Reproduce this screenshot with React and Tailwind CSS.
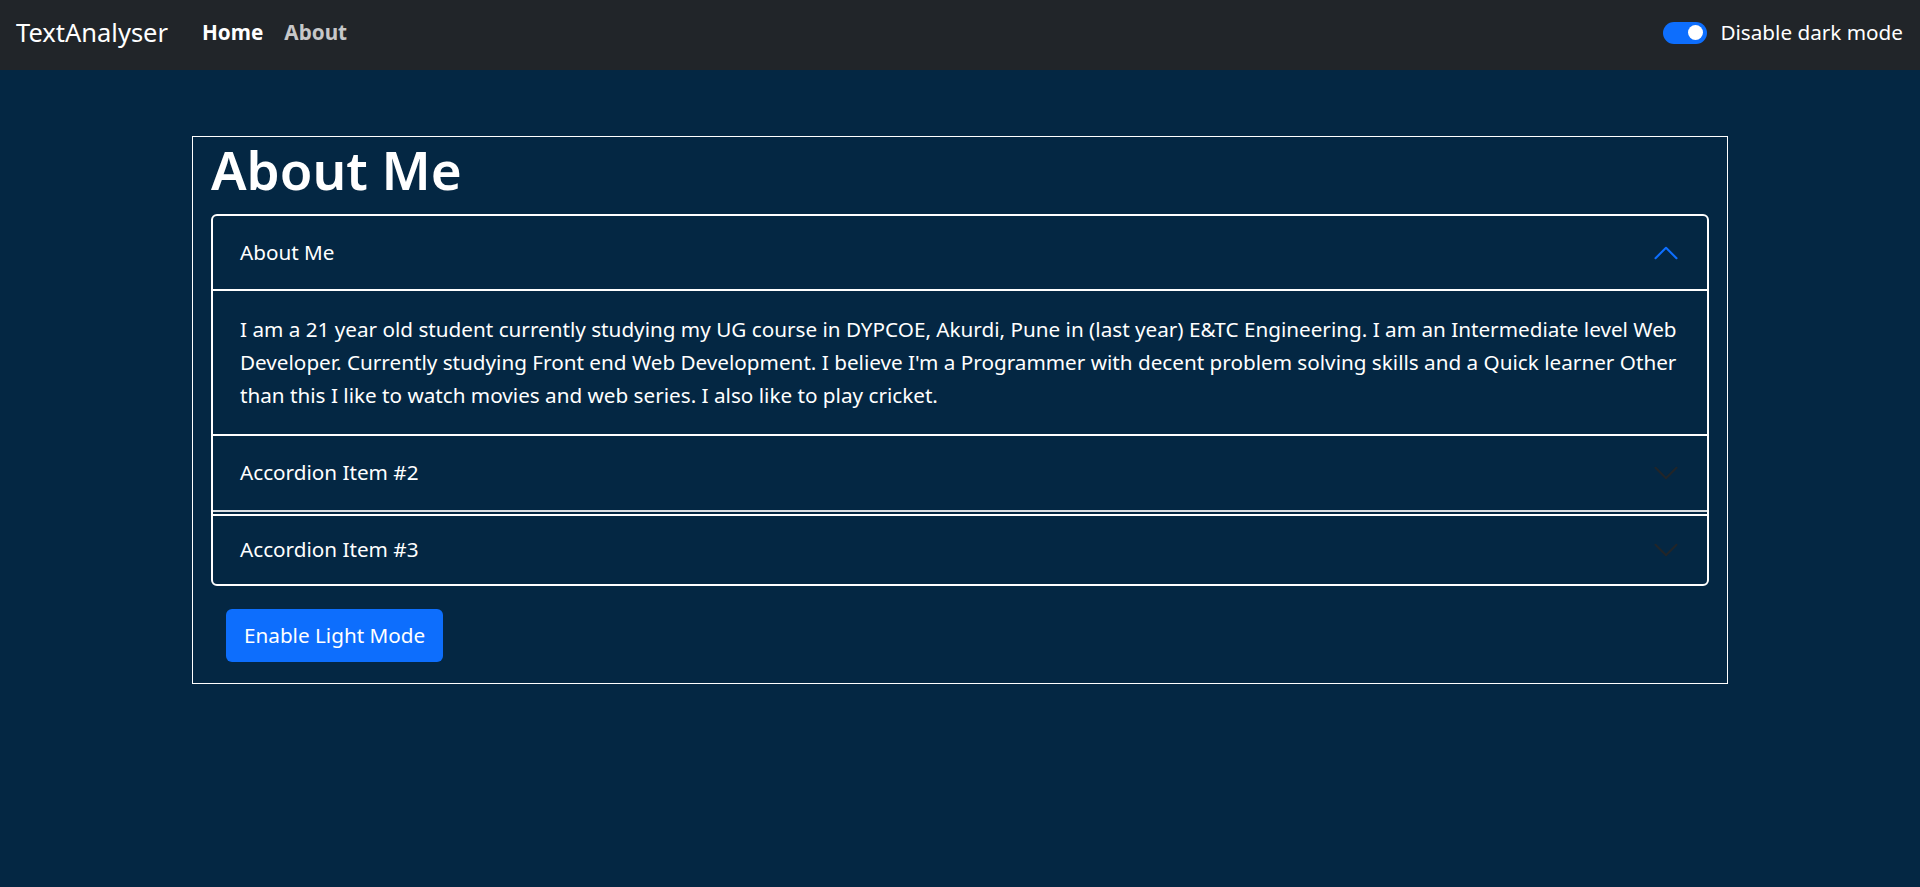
import React from 'react';

const font = { fontFamily: '"Noto Sans", "Open Sans", sans-serif' };

function Chevron({ open }) {
  return (
    <svg
      viewBox="0 0 16 16"
      className={`h-[28px] w-[28px] shrink-0 ${open ? 'rotate-180 text-[#0d6efd]' : 'text-[#212529]'}`}
      fill="none"
      stroke="currentColor"
      strokeWidth="1.2"
      strokeLinecap="round"
      strokeLinejoin="round"
    >
      <path d="M2 5L8 11L14 5" />
    </svg>
  );
}

function AccordionHeader({ title, open, tall = 'h-[73px]' }) {
  return (
    <button className={`flex ${tall} w-full items-center justify-between px-[27px] text-left text-[20.7px] text-white`}>
      <span>{title}</span>
      <Chevron open={open} />
    </button>
  );
}

export default function App() {
  const lines = [
    'I am a 21 year old student currently studying my UG course in DYPCOE, Akurdi, Pune in (last year) E&TC Engineering. I am an Intermediate level Web',
    "Developer. Currently studying Front end Web Development. I believe I'm a Programmer with decent problem solving skills and a Quick learner Other",
    'than this I like to watch movies and web series. I also like to play cricket.',
  ];

  return (
    <div className="min-h-[887px] bg-[#042743] text-white" style={font}>
      {/* Navbar */}
      <nav className="flex h-[70px] items-center justify-between bg-[#212529] pb-[4px] pl-[16px] pr-[17px]">
        <div className="flex items-center">
          <span className="text-[25.5px] leading-none text-white">TextAnalyser</span>
          <div className="ml-[34px] flex items-center gap-[21px] text-[20.7px] font-bold">
            <a className="text-white">Home</a>
            <a className="text-white/75">About</a>
          </div>
        </div>
        <label className="flex items-center gap-[13px] text-[20.7px]">
          <span className="relative flex h-[22px] w-[44px] items-center rounded-full bg-[#0d6efd]">
            <span className="absolute right-[4px] h-[15px] w-[15px] rounded-full bg-white" />
          </span>
          <span>Disable dark mode</span>
        </label>
      </nav>

      {/* Main */}
      <div className="mx-auto mt-[66px] w-[80%] border border-white px-[18px] pb-[21px]">
        <h1 className="mb-[11px] text-[53px] font-semibold leading-[66px]">About Me</h1>

        <div className="overflow-hidden rounded-[6px] border-2 border-white">
          <div>
            <AccordionHeader title="About Me" open />
            <div className="border-t-2 border-white px-[27px] py-[22px] text-[20.7px] leading-[33px]">
              {lines.map((l, i) => (
                <span key={i} className="block whitespace-nowrap">{l}</span>
              ))}
            </div>
          </div>
          <div className="border-t-2 border-b-2 border-t-white border-b-[#d9dde1]">
            <AccordionHeader title="Accordion Item #2" tall="h-[74px]" />
          </div>
          <div className="mt-[2px] border-t-2 border-white">
            <AccordionHeader title="Accordion Item #3" tall="h-[68px]" />
          </div>
        </div>

        <button className="ml-[15px] mt-[23px] h-[53px] rounded-[6px] bg-[#0d6efd] px-[18px] text-[20.7px] text-white">
          Enable Light Mode
        </button>
      </div>
    </div>
  );
}
